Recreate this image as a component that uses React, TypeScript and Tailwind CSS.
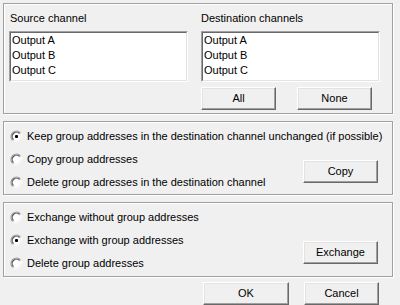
import React from 'react';

// Ventana clásica de Windows: bordes 3D hechos con sombras
const FONT = { fontFamily: '"Liberation Sans", Arial, sans-serif' };

const GROUP_CLASSES =
   'border border-[#a0a0a0] shadow-[inset_1px_1px_0_#fff,1px_1px_0_#fff] relative';

const BUTTON_CLASSES =
   'flex items-center justify-center bg-[#f0f0f0] text-[11px] text-black border border-t-white border-l-white border-b-[#696969] border-r-[#696969] shadow-[inset_-1px_-1px_0_#a0a0a0,inset_1px_1px_0_#e3e3e3]';

const ListBox = ({ items }: { items: string[] }) => (
   <div className="border border-t-[#a0a0a0] border-l-[#a0a0a0] border-b-white border-r-white">
      <div className="h-[49px] bg-white border border-t-[#696969] border-l-[#696969] border-b-[#e3e3e3] border-r-[#e3e3e3] pl-[1px]">
         {items.map(item => (
            <div key={item} className="text-[11px] leading-[15px] text-black">
               {item}
            </div>
         ))}
      </div>
   </div>
);

const Radio = ({ checked, label }: { checked?: boolean; label: string }) => (
   <div className="flex items-center gap-[4px] h-[13px]">
      <svg width="13" height="13" viewBox="0 0 13 13" className="shrink-0">
         <circle cx="6.5" cy="6.5" r="5.5" fill="#e3e3e3" />
         <path d="M2.6 10.4 A5.5 5.5 0 0 1 10.4 2.6" fill="none" stroke="#a0a0a0" strokeWidth="1.2" />
         <circle cx="6.5" cy="6.5" r="4.2" fill="#fff" />
         <path d="M3.5 9.5 A4.2 4.2 0 0 1 9.5 3.5" fill="none" stroke="#555" strokeWidth="1.1" />
         <path d="M11.3 4 A5.5 5.5 0 0 1 4 11.3" fill="none" stroke="#fff" strokeWidth="1" />
         {checked && <rect x="5" y="5" width="3" height="3" rx="1" fill="#000" />}
      </svg>
      <span className="text-[11px] text-black whitespace-nowrap">{label}</span>
   </div>
);

export default function App() {
   const outputs = ['Output A', 'Output B', 'Output C'];

   return (
      <div
         className="w-[400px] h-[305px] bg-[#f0f0f0] overflow-hidden pt-[3px] pl-[3px] pr-[7px] flex flex-col"
         style={FONT}
      >
         {/* CANALES */}
         <div className={`${GROUP_CLASSES} h-[111px] flex gap-[13px] pl-[5px] pr-[12px] pt-[7px]`}>
            <div className="w-[179px] flex flex-col">
               <div className="text-[11px] text-black h-[14px] leading-[14px] pl-[1px] mb-[6px]">
                  Source channel
               </div>
               <ListBox items={outputs} />
            </div>
            <div className="flex-1 flex flex-col">
               <div className="text-[11px] text-black h-[14px] leading-[14px] mb-[6px]">
                  Destination channels
               </div>
               <ListBox items={outputs} />
               <div className="flex gap-[21px] mt-[5px]">
                  <button className={`${BUTTON_CLASSES} w-[75px] h-[23px]`}>All</button>
                  <button className={`${BUTTON_CLASSES} w-[75px] h-[23px]`}>None</button>
               </div>
            </div>
         </div>

         {/* DIRECCIONES DE GRUPO */}
         <div className={`${GROUP_CLASSES} h-[74px] mt-[7px] pl-[6px] pr-[14px] pt-[8px] flex`}>
            <div className="flex flex-col gap-[10px] flex-1">
               <Radio checked label="Keep group addresses in the destination channel unchanged (if possible)" />
               <Radio label="Copy group addresses" />
               <Radio label="Delete group adresses in the destination channel" />
            </div>
            <div className="absolute right-[14px] top-[38px]">
               <button className={`${BUTTON_CLASSES} w-[75px] h-[23px]`}>Copy</button>
            </div>
         </div>

         {/* INTERCAMBIO */}
         <div className={`${GROUP_CLASSES} h-[75px] mt-[7px] pl-[6px] pr-[14px] pt-[8px] flex items-start`}>
            <div className="flex flex-col gap-[10px] flex-1">
               <Radio label="Exchange without group addresses" />
               <Radio checked label="Exchange with group addresses" />
               <Radio label="Delete group addresses" />
            </div>
            <button className={`${BUTTON_CLASSES} w-[75px] h-[23px] mt-[30px]`}>Exchange</button>
         </div>

         {/* BOTONES */}
         <div className="flex justify-end gap-[15px] pr-[14px] mt-[5px]">
            <button className={`${BUTTON_CLASSES} w-[86px] h-[23px]`}>OK</button>
            <button className={`${BUTTON_CLASSES} w-[75px] h-[23px]`}>Cancel</button>
         </div>
      </div>
   );
}
